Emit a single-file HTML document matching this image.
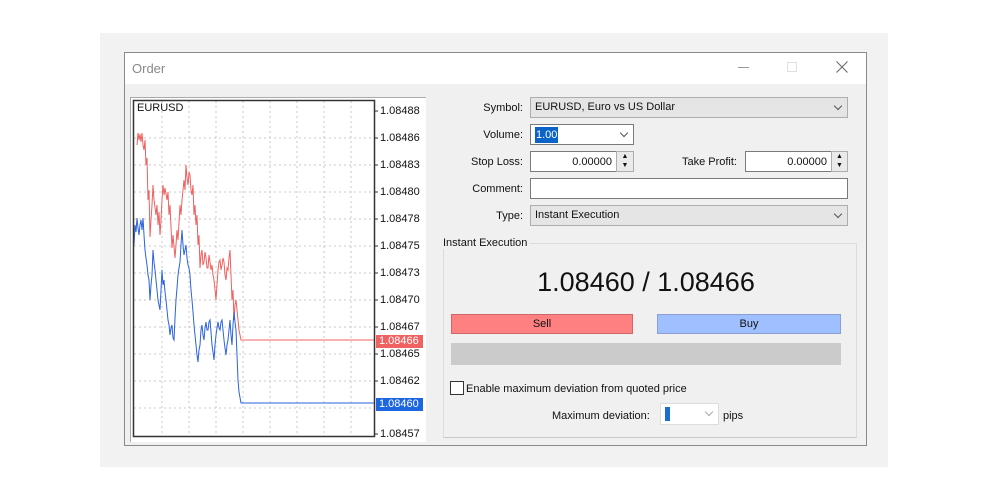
<!DOCTYPE html>
<html><head><meta charset="utf-8"><style>
*{margin:0;padding:0;box-sizing:border-box}
body{width:1000px;height:482px;background:#fff;position:relative;overflow:hidden;font-family:"Liberation Sans",sans-serif;font-size:11px;color:#111}
.a{position:absolute}
.lbl{position:absolute;text-align:right;font-size:11px}
.box{position:absolute;background:#fff;border:1px solid #7a7a7a}
.sel{position:absolute;background:#e5e5e5;border:1px solid #adadad;padding-left:4px;line-height:19px}
.chev{position:absolute;right:6px;top:5px;width:6px;height:6px;border-right:1px solid #555;border-bottom:1px solid #555;transform:rotate(45deg)}
.spin{position:absolute;background:#eaeaea;border:1px solid #adadad}
.yl{position:absolute;left:380px;font-size:11px;color:#111}
</style></head><body>
<div class="a" style="left:100px;top:33px;width:788px;height:434px;background:#f2f2f2"></div>
<div class="a" style="left:124px;top:52px;width:743px;height:394px;background:#f0f0f0;border:1px solid #8a8a8a"></div>
<div class="a" style="left:125px;top:53px;width:741px;height:31px;background:#fff"></div>
<div class="a" style="left:132px;top:61px;font-size:13px;color:#888">Order</div>
<div class="a" style="left:738px;top:67px;width:11px;height:1px;background:#999"></div>
<div class="a" style="left:787px;top:62px;width:10px;height:10px;border:1px solid #e0e0e0"></div>
<svg class="a" style="left:836px;top:61px" width="12" height="12"><path d="M0.5 0.5L11.5 11.5M11.5 0.5L0.5 11.5" stroke="#666" stroke-width="1"/></svg>

<div class="a" style="left:130px;top:97px;width:296px;height:345px;background:#fff;border-top:1px solid #aaa;border-left:1px solid #aaa"></div>
<svg class="a" style="left:0;top:0" width="1000" height="482">
<g stroke="#c8c8c8" stroke-dasharray="2,3" stroke-width="1">
<line x1="162" y1="101" x2="162" y2="436"/><line x1="189" y1="101" x2="189" y2="436"/><line x1="216" y1="101" x2="216" y2="436"/><line x1="243" y1="101" x2="243" y2="436"/><line x1="270" y1="101" x2="270" y2="436"/><line x1="297" y1="101" x2="297" y2="436"/><line x1="324" y1="101" x2="324" y2="436"/><line x1="351" y1="101" x2="351" y2="436"/>
<line x1="134" y1="138" x2="374" y2="138"/><line x1="134" y1="165" x2="374" y2="165"/><line x1="134" y1="192" x2="374" y2="192"/><line x1="134" y1="219" x2="374" y2="219"/><line x1="134" y1="246" x2="374" y2="246"/><line x1="134" y1="273" x2="374" y2="273"/><line x1="134" y1="300" x2="374" y2="300"/><line x1="134" y1="327" x2="374" y2="327"/><line x1="134" y1="354" x2="374" y2="354"/><line x1="134" y1="381" x2="374" y2="381"/><line x1="134" y1="408" x2="374" y2="408"/>
</g>
<polyline fill="none" stroke="#f06060" stroke-width="1" points="137,145 138,133 139,140 140,134 141,142 142,133 143,145 144,150 145,140 146,165 147,158 148,200 149,190 150,237 151,220 152,205 153,185 154,200 156,215 157,205 158,225 159,212 160,235 161,220 162,200 163,185 164,195 165,188 167,200 168,192 169,215 170,205 172,248 173,235 175,258 176,245 177,230 178,240 180,205 181,215 182,200 183,190 184,180 185,190 186,165 187,178 188,185 189,172 190,175 191,190 192,195 193,185 194,215 195,205 196,225 197,215 198,245 199,235 200,268 201,255 202,250 203,265 204,262 205,252 206,258 207,268 208,268 209,255 210,262 211,270 212,265 213,275 214,280 215,290 216,300 217,285 218,270 219,262 220,260 221,270 222,265 223,258 224,262 225,275 226,280 227,268 228,270 229,258 230,250 231,275 232,300 233,290 234,320 235,305 236,300 237,310 238,320 239,330 241,340 374,340"/>
<polyline fill="none" stroke="#2a62e0" stroke-width="1" points="134,245 135,225 136,232 137,218 138,228 139,235 140,225 141,220 142,230 143,218 144,235 145,250 146,258 147,265 148,275 149,280 150,300 151,285 152,275 153,250 154,262 155,270 156,280 157,290 158,300 159,305 160,310 161,290 162,270 163,285 164,280 165,292 166,300 167,310 168,320 169,325 170,335 171,328 172,325 173,338 174,340 175,318 176,300 177,288 178,275 179,268 180,262 181,245 182,230 183,245 184,255 185,250 186,245 187,258 188,265 189,268 190,275 191,290 192,300 193,312 194,325 195,335 196,345 197,355 198,362 199,350 200,345 201,330 202,325 203,335 204,340 205,328 206,322 207,330 208,330 209,322 210,320 211,332 212,345 213,352 214,360 215,345 216,335 217,328 218,322 219,328 220,330 221,322 222,320 223,330 224,340 225,348 226,355 227,345 228,340 229,330 230,320 231,335 232,345 233,325 234,312 235,322 236,330 237,355 238,380 239,392 241,403 374,403"/>
<rect x="133.5" y="100.5" width="241" height="336" fill="none" stroke="#333" stroke-width="1.5"/>
<g stroke="#333"><line x1="374" y1="111" x2="378" y2="111"/><line x1="374" y1="138" x2="378" y2="138"/><line x1="374" y1="165" x2="378" y2="165"/><line x1="374" y1="192" x2="378" y2="192"/><line x1="374" y1="219" x2="378" y2="219"/><line x1="374" y1="246" x2="378" y2="246"/><line x1="374" y1="273" x2="378" y2="273"/><line x1="374" y1="300" x2="378" y2="300"/><line x1="374" y1="327" x2="378" y2="327"/><line x1="374" y1="354" x2="378" y2="354"/><line x1="374" y1="381" x2="378" y2="381"/><line x1="374" y1="434" x2="378" y2="434"/></g>
</svg>
<div class="a" style="left:137px;top:102px;font-size:11px">EURUSD</div>
<div class="yl" style="top:105px">1.08488</div>
<div class="yl" style="top:132px">1.08486</div>
<div class="yl" style="top:159px">1.08483</div>
<div class="yl" style="top:186px">1.08480</div>
<div class="yl" style="top:213px">1.08478</div>
<div class="yl" style="top:240px">1.08475</div>
<div class="yl" style="top:267px">1.08473</div>
<div class="yl" style="top:294px">1.08470</div>
<div class="yl" style="top:321px">1.08467</div>
<div class="yl" style="top:348px">1.08465</div>
<div class="yl" style="top:375px">1.08462</div>
<div class="yl" style="top:428px">1.08457</div>
<div class="a" style="left:376px;top:335px;width:47px;height:13px;background:#f06262;color:#fff;font-size:11px;padding-left:3px;line-height:13px">1.08466</div>
<div class="a" style="left:376px;top:398px;width:47px;height:13px;background:#1c66e0;color:#fff;font-size:11px;padding-left:3px;line-height:13px">1.08460</div>

<div class="lbl" style="left:440px;width:83px;top:102px">Symbol:</div>
<div class="sel" style="left:530px;top:97px;width:318px;height:21px">EURUSD, Euro vs US Dollar<div class="chev"></div></div>
<div class="lbl" style="left:440px;width:83px;top:129px">Volume:</div>
<div class="box" style="left:530px;top:124px;width:104px;height:21px"><span class="a" style="left:4px;top:2px;background:#0a64c8;color:#fff;padding:0 1px;line-height:16px">1.00</span><div class="chev"></div></div>
<div class="lbl" style="left:440px;width:83px;top:156px">Stop Loss:</div>
<div class="box" style="left:530px;top:151px;width:87px;height:21px;text-align:right;padding-right:4px;line-height:20px">0.00000</div>
<div class="spin" style="left:616px;top:151px;width:18px;height:21px;font-size:7px;text-align:center;line-height:9px">▲<br>▼</div>
<div class="lbl" style="left:650px;width:87px;top:156px">Take Profit:</div>
<div class="box" style="left:745px;top:151px;width:87px;height:21px;text-align:right;padding-right:4px;line-height:20px">0.00000</div>
<div class="spin" style="left:831px;top:151px;width:17px;height:21px;font-size:7px;text-align:center;line-height:9px">▲<br>▼</div>
<div class="lbl" style="left:440px;width:83px;top:183px">Comment:</div>
<div class="box" style="left:530px;top:178px;width:318px;height:21px"></div>
<div class="lbl" style="left:440px;width:83px;top:210px">Type:</div>
<div class="sel" style="left:530px;top:205px;width:318px;height:21px">Instant Execution<div class="chev"></div></div>

<div class="a" style="left:443px;top:243px;width:414px;height:195px;border:1px solid #dcdcdc;border-bottom-color:#c8c8c8"></div>
<div class="a" style="left:440px;top:237px;background:#f0f0f0;padding:0 3px;font-size:11px">Instant Execution</div>
<div class="a" style="left:443px;top:267px;width:406px;text-align:center;font-size:27px;color:#111">1.08460 / 1.08466</div>
<div class="a" style="left:451px;top:314px;width:182px;height:20px;background:#ff8080;border:1px solid #cc6868;text-align:center;line-height:19px">Sell</div>
<div class="a" style="left:657px;top:314px;width:184px;height:20px;background:#a0bfff;border:1px solid #8aa0d0;text-align:center;line-height:19px">Buy</div>
<div class="a" style="left:451px;top:343px;width:390px;height:22px;background:#cbcbcb"></div>
<div class="a" style="left:450px;top:381px;width:14px;height:14px;background:#fff;border:1px solid #333"></div>
<div class="a" style="left:466px;top:383px">Enable maximum deviation from quoted price</div>
<div class="a" style="left:552px;top:410px">Maximum deviation:</div>
<div class="a" style="left:660px;top:403px;width:59px;height:22px;background:#fff;border:1px solid #ddd"><span class="a" style="left:4px;top:3px;width:5px;height:14px;background:#1a6ed0"></span><div class="chev" style="border-color:#aaa"></div></div>
<div class="a" style="left:723px;top:410px">pips</div>
</body></html>
